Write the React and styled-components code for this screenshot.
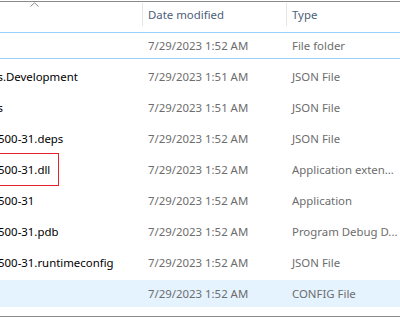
import styled, { createGlobalStyle } from "styled-components";

const SCROLL_X = 62;
const NAME_W = 142 + SCROLL_X;
const DATE_W = 144;

const files = [
  { name: "runtimes", date: "7/29/2023 1:52 AM", type: "File folder", focused: true },
  { name: "appsettings.Development", date: "7/29/2023 1:51 AM", type: "JSON File" },
  { name: "appsettings", date: "7/29/2023 1:51 AM", type: "JSON File" },
  { name: "WebServer500-31.deps", date: "7/29/2023 1:52 AM", type: "JSON File" },
  { name: "WebServer500-31.dll", date: "7/29/2023 1:52 AM", type: "Application exten...", marked: true },
  { name: "WebServer500-31", date: "7/29/2023 1:52 AM", type: "Application" },
  { name: "WebServer500-31.pdb", date: "7/29/2023 1:52 AM", type: "Program Debug D..." },
  { name: "WebServer500-31.runtimeconfig", date: "7/29/2023 1:52 AM", type: "JSON File" },
  { name: "web", date: "7/29/2023 1:52 AM", type: "CONFIG File", hovered: true },
];

const GlobalStyle = createGlobalStyle`
  body {
    margin: 0;
    background: #ffffff;
    overflow: hidden;
    font-family: "Noto Sans", "Open Sans", sans-serif;
    font-size: 11.4px;
  }
`;

const Frame = styled.div`
  width: 400px;
  height: 317px;
  box-sizing: border-box;
  overflow: hidden;
  border-bottom: 1px solid #8a8a8a;
`;

/* the list is scrolled sideways, so the Name column starts off screen */
const List = styled.div`
  margin-left: -${SCROLL_X}px;
  width: ${400 + SCROLL_X}px;
  display: flex;
  flex-direction: column;
  gap: 4px;
`;

const Header = styled.div`
  margin-top: 1px;
  margin-bottom: 2px;
  border-top: 1px solid #8a8a8a;
  height: 24px;
  display: grid;
  grid-template-columns: ${NAME_W}px ${DATE_W}px 1fr;
`;

const HeaderName = styled.div`
  display: flex;
  justify-content: center;
  align-items: flex-start;
  padding-right: 12px;
`;

const HeaderCell = styled.div`
  margin-top: 1px;
  border-left: 1px solid #e5e5e5;
  padding-left: 5px;
  display: flex;
  align-items: center;
  color: #4c607a;
  white-space: nowrap;
`;

const Row = styled.div`
  position: relative;
  height: 27px;
  box-sizing: border-box;
  display: grid;
  grid-template-columns: ${NAME_W}px ${DATE_W}px 1fr;
  align-items: center;
  border-top: 1px solid ${({ $focused }) => ($focused ? "#99d1ff" : "transparent")};
  border-bottom: 1px solid ${({ $focused }) => ($focused ? "#99d1ff" : "transparent")};
  background: ${({ $hovered }) => ($hovered ? "#e5f3ff" : "transparent")};
`;

const NameCell = styled.div`
  padding-left: 2px;
  color: #000000;
  white-space: nowrap;
  overflow: hidden;
`;

const InfoCell = styled.div`
  padding-left: 6px;
  color: #6d6d6d;
  white-space: nowrap;
  overflow: hidden;
`;

const Mark = styled.div`
  position: absolute;
  top: -4px;
  left: 0;
  width: ${SCROLL_X + 59}px;
  height: 33px;
  box-sizing: border-box;
  border: 1px solid #e3212b;
  pointer-events: none;
`;

const SortArrow = () => (
  <svg width="9" height="5" viewBox="0 0 9 5">
    <polyline points="0.5,4.5 4.5,0.8 8.5,4.5" fill="none" stroke="#8c8c8c" strokeWidth="1" />
  </svg>
);

export default function App() {
  return (
    <Frame>
      <GlobalStyle />
      <List>
        <Header>
          <HeaderName>
            <SortArrow />
          </HeaderName>
          <HeaderCell>Date modified</HeaderCell>
          <HeaderCell>Type</HeaderCell>
        </Header>
        {files.map((f) => (
          <Row key={f.name} $focused={f.focused} $hovered={f.hovered}>
            {f.marked && <Mark />}
            <NameCell>{f.name}</NameCell>
            <InfoCell>{f.date}</InfoCell>
            <InfoCell>{f.type}</InfoCell>
          </Row>
        ))}
      </List>
    </Frame>
  );
}
